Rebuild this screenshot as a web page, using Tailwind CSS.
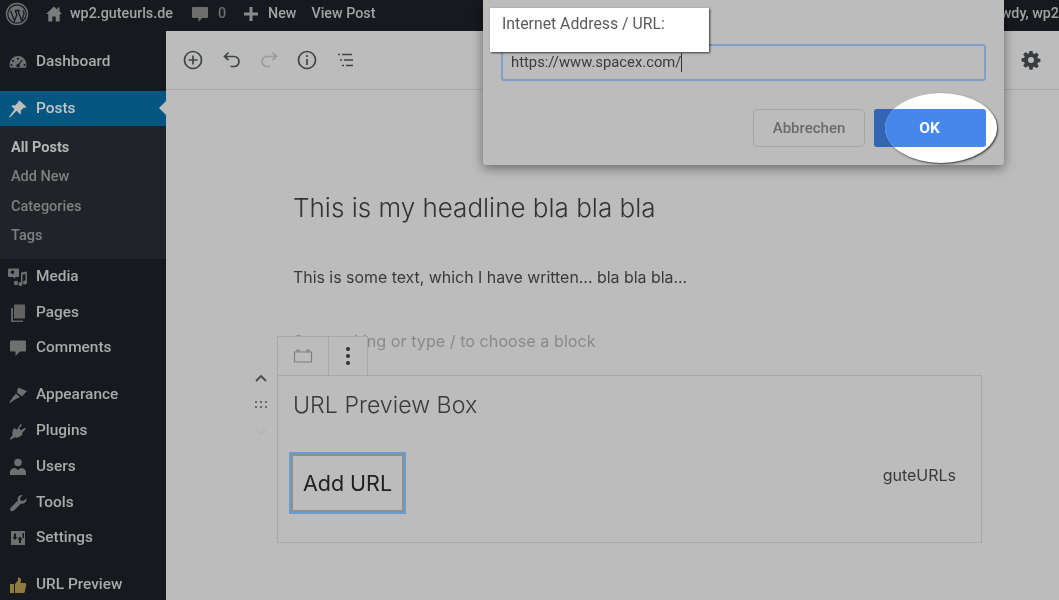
<!DOCTYPE html>
<html lang="en">
<head>
<meta charset="utf-8">
<script src="https://cdn.jsdelivr.net/npm/@tailwindcss/browser@4"></script>
<title>URL Preview</title>
</head>
<body class="m-0 overflow-hidden bg-[#bcbcbc]">
<div class="relative w-[1059px] h-[600px] overflow-hidden bg-[#bcbcbc] font-['Roboto',sans-serif] blur-[0.45px]">

  <!-- admin bar -->
  <header class="flex items-center h-[31px] bg-[#16191d] text-[#a3a3a3] text-[14.300px] font-medium pb-[3px]">
    <svg class="ml-[5px] w-[24px] h-[24px] text-[#6e7073]" viewBox="0 0 24 24" fill="none"><circle cx="12" cy="12" r="10.500" stroke="currentColor" stroke-width="1.400"/><circle cx="12" cy="12" r="8.600" fill="currentColor"/><path d="M5.500 8.500l4 10.500 2.300-6.300-1.600-4.200M10 8.500h4.800M12.800 8.500l3.900 10.500 2.200-7c.4-1.500-.3-2.600-1-3.500" stroke="#16191d" stroke-width="1.300"/></svg>
    <svg class="ml-[16px] w-[18px] h-[18px] text-[#7c7c7c]" viewBox="0 0 18 18" fill="currentColor"><path d="M9 1.500L1 9h2.300v7.500h4v-5h3.400v5h4V9H17l-2.500-2.400V2.500h-2v2.200z"/></svg>
    <span class="ml-[7px]">wp2.guteurls.de</span>
    <svg class="ml-[18px] w-[18px] h-[18px] text-[#6e6e6e]" viewBox="0 0 18 18" fill="currentColor"><path d="M2 2h14a1 1 0 0 1 1 1v9a1 1 0 0 1-1 1h-5l-3.500 4v-4H2a1 1 0 0 1-1-1V3a1 1 0 0 1 1-1z"/></svg>
    <span class="ml-[9px] text-[#6e6e6e]">0</span>
    <svg class="ml-[17px] w-[16px] h-[16px] text-[#8a8a8a]" viewBox="0 0 16 16" fill="currentColor"><path d="M6.500 1h3v5.500H15v3H9.500V15h-3V9.500H1v-3h5.500z"/></svg>
    <span class="ml-[9px]">New</span>
    <span class="ml-[15px]">View Post</span>
    <span class="ml-auto">Howdy, wp2</span>
  </header>

  <div class="flex h-[569px]">
    <!-- sidebar -->
    <nav class="w-[166px] shrink-0 bg-[#16191d] pt-[12px] text-[15.400px] font-medium text-[#aaaaaa]">
      <a class="flex items-center h-[36px] pt-[1px] pl-[8px] gap-[8px]">
        <svg class="w-[20px] h-[20px] text-[#6f6f6f]" viewBox="0 0 20 20" fill="currentColor"><path d="M10 4a8.500 8.500 0 0 0-8.500 8.500c0 1.200.3 2.300.7 3.300h15.600c.4-1 .7-2.100.7-3.300A8.500 8.500 0 0 0 10 4zm0 1.800a1 1 0 1 1 0 2 1 1 0 0 1 0-2zM5 8a1 1 0 1 1 0 2 1 1 0 0 1 0-2zm8.800-.5l.9.500-3.200 4.600a1.700 1.700 0 1 1-1.100-.7zM3.500 12a1 1 0 1 1 0 2 1 1 0 0 1 0-2zm13 0a1 1 0 1 1 0 2 1 1 0 0 1 0-2z" fill-rule="evenodd"/></svg>
        <span>Dashboard</span>
      </a>
      <a class="relative flex items-center h-[35px] mt-[12px] pl-[8px] gap-[8px] bg-[#055680] text-[#c4c4c4]">
        <svg class="w-[20px] h-[20px] text-[#bdbdbd]" viewBox="0 0 20 20" fill="currentColor"><path d="M11.500 1.500l7 6.500-1.500 1-1-.5-3.300 3.200c.5 1.400.3 2.800-.4 3.800L8.500 11.800 2 18.500 1 18l5.500-7.800L3.200 7c1-.8 2.500-1 3.800-.5l3.300-3.300-.2-1z"/></svg>
        <span>Posts</span>
        <span class="absolute right-0 top-[10px] w-0 h-0 border-y-[7px] border-y-transparent border-r-[7px] border-r-[#bcbcbc]"></span>
      </a>
      <ul class="bg-[#202327] h-[133px] pt-[7px] pl-[11px] text-[14.500px] text-[#7f8082]">
        <li class="h-[29.500px] flex items-center font-bold text-[#b5b5b5]">All Posts</li>
        <li class="h-[29.500px] flex items-center">Add New</li>
        <li class="h-[29.500px] flex items-center">Categories</li>
        <li class="h-[29.500px] flex items-center">Tags</li>
      </ul>
      <a class="flex items-center h-[35px] pl-[8px] gap-[8px]">
        <svg class="w-[20px] h-[20px] text-[#6f6f6f]" viewBox="0 0 20 20" fill="currentColor"><path d="M1 1.500h9a1 1 0 0 1 1 1V9a1 1 0 0 1-1 1H7.500L6.500 12l-1-2H1a1 1 0 0 1-1-1V2.500a1 1 0 0 1 1-1zm3.500 2a1.800 1.800 0 1 0 0 3.600 1.800 1.800 0 0 0 0-3.600z" fill-rule="evenodd"/><path d="M13 5.500l6-1v11a2 2 0 1 1-1.500-1.900V7l-3 .6v9.400a2 2 0 1 1-1.500-1.900z"/><circle cx="8" cy="16" r="2.200"/></svg>
        <span>Media</span>
      </a>
      <a class="flex items-center h-[36px] pt-[1px] pl-[8px] gap-[8px]">
        <svg class="w-[20px] h-[20px] text-[#626262]" viewBox="0 0 20 20" fill="currentColor"><path d="M6 1.500h11v14H6z"/><path d="M3 5h2v12.500h10v1.500H3z"/></svg>
        <span>Pages</span>
      </a>
      <a class="flex items-center h-[35px] pl-[8px] gap-[8px]">
        <svg class="w-[20px] h-[20px] text-[#6f6f6f]" viewBox="0 0 20 20" fill="currentColor"><path d="M3 2.500h14a1 1 0 0 1 1 1v9a1 1 0 0 1-1 1h-5L7.500 18v-4.500H3a1 1 0 0 1-1-1v-9a1 1 0 0 1 1-1z"/></svg>
        <span>Comments</span>
      </a>
      <a class="flex items-center h-[36px] pt-[1px] mt-[11px] pl-[8px] gap-[8px]">
        <svg class="w-[20px] h-[20px] text-[#6f6f6f]" viewBox="0 0 20 20" fill="currentColor"><path d="M10 2.500l9 3.500-5 5.500-5-4zM8 8.500l4 3.500-3 1.500-2 1-5 3.500-.5-.8L5 12z"/></svg>
        <span>Appearance</span>
      </a>
      <a class="flex items-center h-[36px] pt-[1px] pl-[8px] gap-[8px]">
        <svg class="w-[20px] h-[20px] text-[#6f6f6f]" viewBox="0 0 20 20" fill="currentColor"><path d="M12.500 3l1.500 1-3 3.500 2.500 1.800 3-2.500 1.200 1.400-3.200 3c.3 2-.8 3.500-3.500 4.800-1.800.9-3.200.8-4.500.3L3.200 18.500 1.500 18l3-3.500C4 12 4.500 9.500 6 7l3 1.800z"/></svg>
        <span>Plugins</span>
      </a>
      <a class="flex items-center h-[36px] pt-[1px] pl-[8px] gap-[8px]">
        <svg class="w-[20px] h-[20px] text-[#6f6f6f]" viewBox="0 0 20 20" fill="currentColor"><circle cx="10" cy="5.500" r="3.800"/><path d="M2 18v-3c0-2.500 3-4 5-4l3 2 3-2c2 0 5 1.500 5 4v3z"/></svg>
        <span>Users</span>
      </a>
      <a class="flex items-center h-[36px] pt-[1px] pl-[8px] gap-[8px]">
        <svg class="w-[20px] h-[20px] text-[#6f6f6f]" viewBox="0 0 20 20" fill="currentColor"><path d="M18.500 5.500c.3 2-.4 3.700-2 4.600-1.200.7-2.500.7-3.500.3L6 17.500c-1 1-2.500 1-3.300.2-.8-.8-.8-2.200.2-3.200l7-7c-.4-1.100-.3-2.500.3-3.500 1-1.600 2.700-2.300 4.600-2L12 5l.5 2.500L15 8z"/></svg>
        <span>Tools</span>
      </a>
      <a class="flex items-center h-[35px] pl-[8px] gap-[8px]">
        <svg class="w-[20px] h-[20px] text-[#6f6f6f]" viewBox="0 0 20 20" fill="currentColor"><path d="M3 3h14v14H3zM6 5.500v3.500H4.500L7 12l2.500-3H8V5.500zM13 15v-3.500h1.500L12 8.500 9.500 11.500H11V15zM14.500 5h1.500v5h-1.500z" fill-rule="evenodd"/></svg>
        <span>Settings</span>
      </a>
      <a class="flex items-center h-[36px] pt-[1px] mt-[11px] pl-[8px] gap-[8px]">
        <svg class="w-[20px] h-[20px] text-[#8f7a3e]" viewBox="0 0 20 20" fill="currentColor"><path d="M2 9h4v9H2zM7 9l3-3.500V2.500c1.800-.5 3 1 3 2.800 0 1-.3 2-.7 2.700H17c1 0 1.500 1 1.300 1.800l-1.500 7c-.2.800-.8 1.200-1.500 1.200H7z"/></svg>
        <span>URL Preview</span>
      </a>
    </nav>

    <!-- editor -->
    <main class="relative flex-1 font-['Inter',sans-serif] text-[#3a3a3a]">
      <div class="flex items-center h-[59px] border-b border-[#a9a9a9] pl-[17px]">
        <svg class="w-[20px] h-[20px] text-[#3f4447]" viewBox="0 0 20 20" fill="none" stroke="currentColor" stroke-width="1.700"><circle cx="10" cy="10" r="8.500"/><path d="M10 5.500v9M5.500 10h9"/></svg>
        <svg class="ml-[19px] w-[20px] h-[20px] text-[#3f4447]" viewBox="0 0 20 20" fill="none" stroke="currentColor" stroke-width="1.700"><path d="M6.500 2.500L2.500 6.500l4 3.500M2.500 6.500H12a5 5 0 0 1 0 10H8.500"/></svg>
        <svg class="ml-[17px] w-[20px] h-[20px] text-[#9c9c9c]" viewBox="0 0 20 20" fill="none" stroke="currentColor" stroke-width="1.700"><path d="M13.500 2.500l4 4-4 3.500M17.500 6.500H8a5 5 0 0 0 0 10h3.500"/></svg>
        <svg class="ml-[18px] w-[20px] h-[20px] text-[#3f4447]" viewBox="0 0 20 20" fill="none" stroke="currentColor" stroke-width="1.700"><circle cx="10" cy="10" r="8.500"/><path d="M10 9v6"/><path d="M10 5v2"/></svg>
        <svg class="ml-[18px] w-[20px] h-[20px] text-[#3f4447]" viewBox="0 0 20 20" fill="none" stroke="currentColor" stroke-width="1.500"><path d="M3 4.500h2M7 4.500h10M5 10h2M9 10h9M7 15.500h2M11 15.500h7"/></svg>
        <svg class="ml-auto mr-[18px] w-[20px] h-[20px] text-[#3a3d40]" viewBox="0 0 20 20" fill="currentColor"><path d="M8.400 1h3.200l.4 2.500 1.500.6 2-1.500 2.300 2.300-1.500 2 .6 1.500 2.500.4v3.200l-2.500.4-.6 1.500 1.500 2-2.300 2.300-2-1.500-1.500.6-.4 2.500H8.400L8 16.800l-1.500-.6-2 1.500-2.300-2.300 1.500-2-.6-1.500-2.500-.4V8.300l2.500-.4.6-1.500-1.500-2 2.300-2.300 2 1.500L8 3.500zM10 7a3 3 0 1 0 0 6 3 3 0 0 0 0-6z" fill-rule="evenodd"/></svg>
      </div>

      <div class="pl-[127px]">
        <h1 class="mt-[100px] text-[26px] leading-[36px] font-light text-[#333]">This is my headline bla bla bla</h1>
        <p class="mt-[40px] text-[15.900px] leading-[24px] text-[#3a3a3a]">This is some text, which I have written... bla bla bla...</p>
        <p class="mt-[39px] text-[16.200px] leading-[24px] text-[#8a8a8a]">Start writing or type / to choose a block</p>
      </div>

      <!-- block -->
      <section class="relative ml-[111px] mt-[22px] w-[705px] h-[168px] border border-[#a8a8a8] pt-[14px] pl-[15px]">
        <div class="absolute left-[-1px] top-[-40px] flex h-[40px] bg-[#bcbcbc] border border-[#a8a8a8]">
          <div class="flex items-center justify-center w-[51px] border-r border-[#a8a8a8]">
            <svg class="w-[20px] h-[16px] text-[#7f7f7f]" viewBox="0 0 20 16" fill="none" stroke="currentColor" stroke-width="1.200"><path d="M1.500 4h17v10h-17zM4 4V2h2v2M14 4V2h2v2"/></svg>
          </div>
          <div class="flex items-center justify-center w-[38px]">
            <svg class="w-[6px] h-[20px] text-[#303030]" viewBox="0 0 6 20" fill="currentColor"><circle cx="3" cy="3" r="2"/><circle cx="3" cy="10" r="2"/><circle cx="3" cy="17" r="2"/></svg>
          </div>
        </div>
        <div class="absolute left-[-24px] top-[-2px] flex flex-col items-center gap-[18px]">
          <svg class="w-[14px] h-[9px] text-[#4a4a4a]" viewBox="0 0 14 9" fill="none" stroke="currentColor" stroke-width="1.800"><path d="M2 7l5-5 5 5"/></svg>
          <svg class="w-[12px] h-[8px] text-[#6a6a6a]" viewBox="0 0 12 8" fill="currentColor"><path d="M0 0h2v2H0zM5 0h2v2H5zM10 0h2v2h-2zM0 5h2v2H0zM5 5h2v2H5zM10 5h2v2h-2z"/></svg>
          <svg class="w-[14px] h-[9px] text-[#b4b4b4]" viewBox="0 0 14 9" fill="none" stroke="currentColor" stroke-width="1.500"><path d="M2 2l5 5 5-5"/></svg>
        </div>
        <h2 class="text-[23.200px] leading-[30px] font-light text-[#3a3a3a]">URL Preview Box</h2>
        <div class="flex justify-between items-start mt-[32px]">
          <button class="ml-[-4px] w-[117px] h-[62px] border-2 border-[#6d9ccc] bg-[#bcbcbc] text-[21.500px] text-[#222] shadow-[inset_0_0_0_2px_#8f8f8f]">Add URL</button>
          <span class="mt-[11px] mr-[25px] text-[16px] leading-[24px] text-[#3a3a3a]">guteURLs</span>
        </div>
      </section>
    </main>
  </div>

  <!-- dialog -->
  <div class="absolute left-[483px] top-0 w-[521px] h-[165px] bg-[#bcbcbc] rounded-b-[3px] shadow-[0_3px_12px_rgba(0,0,0,0.45)] font-['Roboto',sans-serif]">
    <div class="absolute left-[18px] top-[44px] w-[485px] h-[37px] flex items-center border-2 border-[#7d9fc8] rounded-[3px] pl-[8px] text-[14.800px] text-[#3b3b3b]">https://www.spacex.com/<span class="w-px h-[19px] bg-[#333]"></span></div>
    <div class="absolute left-[270px] top-[109px] flex gap-[9px]">
      <button class="w-[112px] h-[38px] rounded-[4px] border border-[#a6a6a6] text-[15px] font-medium text-[#6b6b6b]">Abbrechen</button>
      <div class="w-[112px] h-[38px] rounded-[3px] bg-[#3266b5]"></div>
    </div>
  </div>

  <!-- callouts -->
  <div class="absolute left-[490px] top-[8px] w-[219px] h-[44px] bg-white shadow-[1px_1px_2px_rgba(0,0,0,0.7)] pl-[12px] pt-[6px] text-[15.800px] leading-[20px] text-[#5a5a5a] font-['Roboto',sans-serif]">Internet Address / URL:</div>
  <div class="absolute left-[885px] top-[93px] w-[112px] h-[70px] rounded-[50%] bg-white overflow-hidden shadow-[1px_1px_2px_rgba(0,0,0,0.7)] font-['Roboto',sans-serif]">
    <div class="absolute left-0 top-[16px] w-[101px] h-[38px] pr-[12px] pt-[1px] rounded-r-[3px] bg-[#4687ee] flex items-center justify-center text-white text-[15.500px] font-bold">OK</div>
  </div>
</div>
</body>
</html>
